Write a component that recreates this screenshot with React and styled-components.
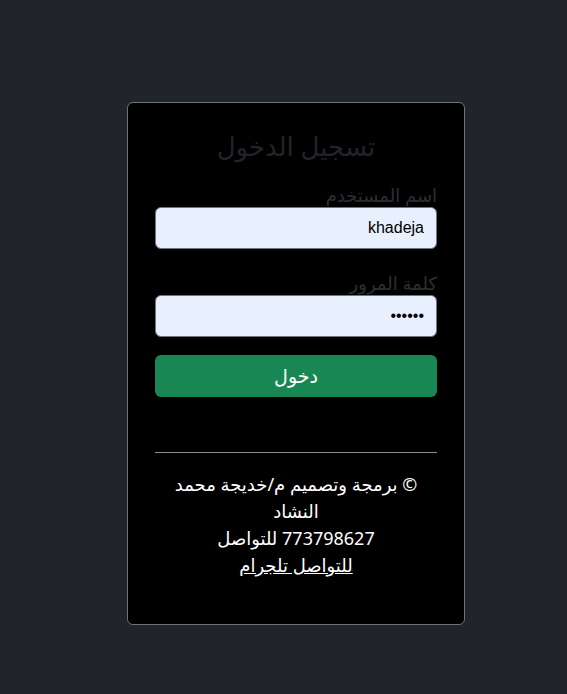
import React from 'react'
import styled, { createGlobalStyle } from 'styled-components'

const Global = createGlobalStyle`
  html, body {
    margin: 0;
    padding: 0;
    background: #212529;
    font-family: "Noto Sans", "DejaVu Sans", sans-serif;
  }
`

const Page = styled.div`
  min-height: 694px;
  padding: 102px 0 0 127px;
  box-sizing: border-box;
`

const Card = styled.form`
  direction: rtl;
  width: 338px;
  height: 523px;
  box-sizing: border-box;
  background: #000;
  border: 1px solid #6c757d;
  border-radius: 6px;
  padding: 27px 27px 0;
  display: flex;
  flex-direction: column;
`

const Title = styled.h2`
  margin: 0 0 20px;
  text-align: center;
  font-size: 26px;
  font-weight: 500;
  line-height: 33px;
  color: #212529;
`

const Field = styled.div`
  display: flex;
  flex-direction: column;
  margin-bottom: ${(p) => p.$mb || 18}px;
`

const Label = styled.label`
  font-size: 18px;
  line-height: 24px;
  color: #2b3035;
`

const Input = styled.input`
  direction: rtl;
  height: 42px;
  box-sizing: border-box;
  background: #e8f0fe;
  border: 1px solid #6c757d;
  border-radius: 6px;
  padding: 0 12px;
  font-family: "Liberation Sans", Arial, sans-serif;
  font-size: 16px;
  color: #000;
  outline: none;
`

const Button = styled.button`
  height: 42px;
  border: none;
  border-radius: 6px;
  background: #198754;
  color: #fff;
  font-family: inherit;
  font-size: 19px;
  cursor: pointer;
`

const Rule = styled.hr`
  border: none;
  border-top: 1px solid #8a8f94;
  margin: 55px 0 18px;
`

const Footer = styled.div`
  text-align: center;
  color: #fff;
  font-size: 18px;
  line-height: 27px;
  padding: 0 14px;

  p {
    margin: 0;
  }
  a {
    color: #fff;
  }
`

export default function App() {
  return (
    <>
      <Global />
      <Page>
        <Card onSubmit={(e) => e.preventDefault()}>
          <Title>تسجيل الدخول</Title>
          <Field $mb={22}>
            <Label>اسم المستخدم</Label>
            <Input type="text" defaultValue="khadeja" />
          </Field>
          <Field>
            <Label>كلمة المرور</Label>
            <Input type="password" defaultValue="123456" />
          </Field>
          <Button type="submit">دخول</Button>
          <Rule />
          <Footer>
            <p>© برمجة وتصميم م/خديجة محمد النشاد</p>
            <p>773798627 للتواصل</p>
            <p>
              <a href="#">للتواصل تلجرام</a>
            </p>
          </Footer>
        </Card>
      </Page>
    </>
  )
}
